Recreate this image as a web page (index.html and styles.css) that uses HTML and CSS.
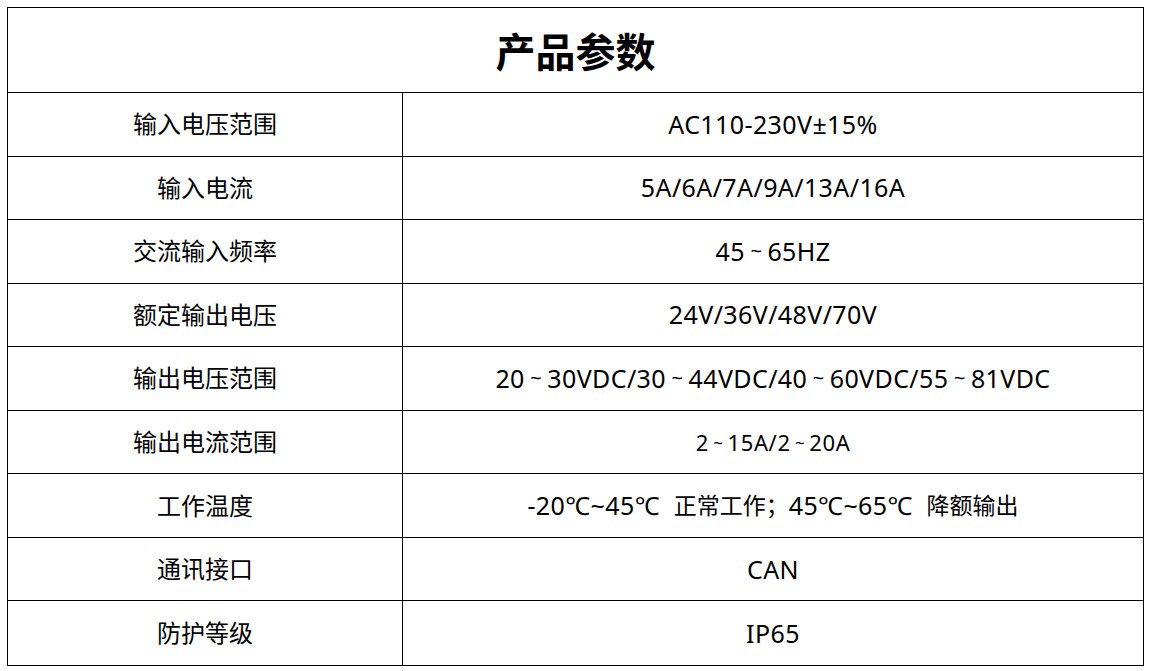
FILE: index.html
```html
<!DOCTYPE html>
<html lang="zh-CN">
<head>
<meta charset="utf-8">
<title>产品参数</title>
<link rel="stylesheet" href="styles.css">
</head>
<body>
<div class="spec">
  <div class="title">产品参数</div>
  <div class="k">输入电压范围</div><div class="v">AC110-230V±15%</div>
  <div class="k">输入电流</div><div class="v">5A/6A/7A/9A/13A/16A</div>
  <div class="k">交流输入频率</div><div class="v">45<span class="wave">~</span>65HZ</div>
  <div class="k">额定输出电压</div><div class="v">24V/36V/48V/70V</div>
  <div class="k">输出电压范围</div><div class="v">20<span class="wave">~</span>30VDC/30<span class="wave">~</span>44VDC/40<span class="wave">~</span>60VDC/55<span class="wave">~</span>81VDC</div>
  <div class="k">输出电流范围</div><div class="v small">2<span class="wave">~</span>15A/2<span class="wave">~</span>20A</div>
  <div class="k">工作温度</div><div class="v">-20℃~45℃&nbsp; <span class="cjk">正常工作；</span>45℃~65℃&nbsp; <span class="cjk">降额输出</span></div>
  <div class="k">通讯接口</div><div class="v">CAN</div>
  <div class="k last">防护等级</div><div class="v last">IP65</div>
</div>
</body>
</html>
```
FILE: styles.css
```css
html, body {
  margin: 0;
  padding: 0;
  background: #fff;
}
body {
  padding: 7px;
  font-family: "Noto Sans", "Noto Sans CJK SC", sans-serif;
  color: #000;
}
.spec {
  box-sizing: border-box;
  width: 1137px;
  height: 659px;
  border: 1px solid #000;
  display: grid;
  grid-template-columns: 395px 1fr;
  grid-template-rows: 85px repeat(9, 1fr);
}
.title {
  grid-column: 1 / 3;
  border-bottom: 1px solid #000;
  display: flex;
  align-items: center;
  justify-content: center;
  font-family: "Noto Sans CJK SC", sans-serif;
  font-weight: 700;
  font-size: 40px;
  line-height: 1;
}
.k, .v {
  display: flex;
  align-items: center;
  justify-content: center;
  border-bottom: 1px solid #000;
  font-size: 24px;
  line-height: 1;
  white-space: pre;
}
.k {
  border-right: 1px solid #000;
}
.v {
  font-size: 25px;
  letter-spacing: 0.4px;
}
.v .cjk {
  font-size: 23px;
  letter-spacing: 0;
}
.v .wave {
  font-size: 20px;
  margin: 0 5.5px;
  letter-spacing: 0;
}
.v.small {
  font-size: 22px;
  letter-spacing: 0.6px;
}
.v.small .wave {
  font-size: 17px;
  margin: 0 4.5px;
}
.last {
  border-bottom: none;
}
```
